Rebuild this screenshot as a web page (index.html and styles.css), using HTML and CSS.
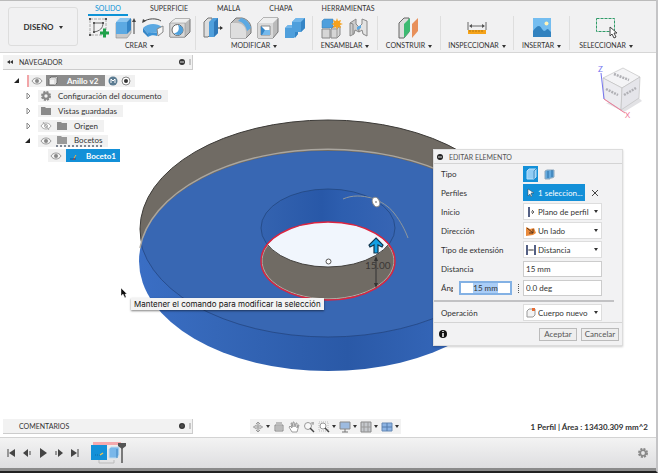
FILE: index.html
```html
<!DOCTYPE html>
<html lang="es">
<head>
    <meta charset="UTF-8">
    <meta name="viewport" content="width=device-width, initial-scale=1.0">
    <title>Anillo v2</title>
    <link rel="stylesheet" href="styles.css">
</head>
<body>
<div class="app">

    <header class="toolbar">
        <button class="workspace">DISEÑO <span class="caret"></span></button>

        <div class="ribbon">
            <nav class="tabs">
                <a href="#" class="tab active">SOLIDO</a>
                <a href="#" class="tab">SUPERFICIE</a>
                <a href="#" class="tab">MALLA</a>
                <a href="#" class="tab">CHAPA</a>
                <a href="#" class="tab">HERRAMIENTAS</a>
            </nav>

            <div class="groups">
                <div class="group crear">
                    <div class="icons">
                        <svg width="22" height="22" viewBox="0 0 22 22"><path d="M2 2h16v16H2z" fill="none" stroke="#aaa" stroke-dasharray="3 1"/><path d="M6 6h9c0 5-3 8-9 9z" fill="none" stroke="#666"/><path d="M1 1h2v2H1zM17 1h2v2h-2zM1 17h2v2H1zM5 5h2v2H5zM14 5h2v2h-2zM5 14h2v2H5z" fill="#555"/><path d="M12 16h9M16.500 11.500v9" stroke="#1fa14a" stroke-width="3"/></svg>
                        <svg width="22" height="22" viewBox="0 0 22 22"><path d="M1 6l4-4h11v14l-4 5H1z" fill="#c9c9c9" stroke="#888" stroke-width=".6"/><path d="M1 5l4-4h11l-4 4z" fill="#8cc6f0"/><path d="M1 5h11v12H1z" fill="#5ca9e2"/><path d="M12 5l4-4v12l-4 4z" fill="#3585c6"/><path d="M19 17V4" stroke="#444"/><path d="M17 5l2-4 2 4z" fill="#444"/></svg>
                        <svg width="22" height="22" viewBox="0 0 22 22"><path d="M1 5C6 1 15 1 19 4" fill="none" stroke="#444"/><path d="M0 6l1-4 3 2z" fill="#444"/><path d="M1 11c5-5 14-5 19-1l-5 6c-3-1-6-1-9 1z" fill="#5ca9e2"/><path d="M1 11v4l5 5v-3z" fill="#3585c6"/><path d="M6 16c3-1 6-1 9 0v3c-3-1-6-1-9 1z" fill="#3c93d6"/><path d="M15 12l6-3v6l-5 4z" fill="#f6f6f6" stroke="#888"/></svg>
                        <svg width="22" height="22" viewBox="0 0 22 22"><path d="M1 6l5-4h15v13l-5 5H1z" fill="#bbb" stroke="#777"/><path d="M1 6l5-4h15l-5 4z" fill="#eee"/><path d="M1 6h15v14H1z" fill="#d9d9d9" stroke="#888" stroke-width=".5"/><circle cx="8.500" cy="13" r="5.500" fill="#fff" stroke="#666"/><path d="M9 8a5 5 0 1 1-4 8c4 0 6-4 4-8z" fill="#4ea0dc"/></svg>
                    </div>
                    <button class="caption">CREAR<span class="caret"></span></button>
                </div>

                <div class="group modificar">
                    <div class="icons">
                        <svg width="22" height="22" viewBox="0 0 22 22"><path d="M1 5l4-4h4v15l-4 4H1z" fill="#ddd" stroke="#777"/><path d="M6 5l4-4h5v15l-4 4H6z" fill="#4f9fdc"/><path d="M11 5l4-4v15l-4 4z" fill="#3078b8"/><path d="M15 11h4" stroke="#333"/><path d="M17 9l3 2-3 2z" fill="#333"/></svg>
                        <svg width="22" height="22" viewBox="0 0 22 22"><path d="M1 6l5-5h6c5 1 9 5 9 10v5l-5 5H1z" fill="#bdbdbd" stroke="#777"/><path d="M1 6h6c5 0 9 4 9 9v6H1z" fill="#dedede"/><path d="M8 4l3-3c5 1 9 5 10 10l-4 3c-1-5-4-9-9-10z" fill="#5ca9e2"/></svg>
                        <svg width="22" height="22" viewBox="0 0 22 22"><path d="M1 6l5-5h15v14l-5 6H1z" fill="#bbb" stroke="#777"/><path d="M1 6l5-5h15l-5 5z" fill="#eee"/><path d="M1 6h15v15H1z" fill="#d9d9d9"/><path d="M4 9h9v9H4z" fill="#fff" stroke="#888"/><path d="M4 9l4 4v5H4z" fill="#3585c6"/><path d="M8 13h5v5H5z" fill="#75b9ec"/></svg>
                        <svg width="22" height="22" viewBox="0 0 22 22"><path d="M1 11l3-3h4V5l4-4h9v10l-4 4h-3v2l-4 4H1z" fill="#4f9fdc"/><path d="M8 5l4-4h9l-4 4zM1 11l3-3h4v3z" fill="#72b6ea"/><path d="M17 5l4-4v10l-4 4zM11 15h3v2l-3 4z" fill="#3585c6"/></svg>
                    </div>
                    <button class="caption">MODIFICAR<span class="caret"></span></button>
                </div>

                <div class="group ensamblar">
                    <div class="icons">
                        <svg width="22" height="22" viewBox="0 0 22 22"><path d="M1 4l2-2h9v9H1z" fill="#4f9fdc" stroke="#3a7cb0" stroke-width=".5"/><path d="M1 12h8v9H1zM10 12l3-3h6v9l-3 3h-6z" fill="#d6d6d6" stroke="#888"/><path d="M10 12h6v9M16 12l3-3" fill="none" stroke="#999"/><path d="M16 1l1 3 3-1-1 3 3 1-3 1 1 3-3-1-1 3-1-3-3 1 1-3-3-1 3-1-1-3 3 1z" fill="#f7a11b"/></svg>
                        <svg width="22" height="22" viewBox="0 0 22 22"><path d="M2 6l6-4v5l3 3v5l-4-2-1 4-4 2z" fill="#ccc" stroke="#888"/><path d="M19 4l-5-2v5l-3 3v5l3-2 1 4 4 2z" fill="#e3e3e3" stroke="#888"/><path d="M2 6l3 1v10" fill="none" stroke="#888"/><path d="M9 10l4-2v3l-4 2z" fill="#5ca9e2"/></svg>
                    </div>
                    <button class="caption">ENSAMBLAR<span class="caret"></span></button>
                </div>

                <div class="group construir">
                    <div class="icons">
                        <svg width="22" height="22" viewBox="0 0 22 22"><path d="M1 6l5-5h5v14l-5 6H1z" fill="#ddd" stroke="#666"/><path d="M6 7l6-6v13l-6 7z" fill="#3dba72"/><path d="M14 7l6-6v13l-6 7z" fill="#e8905a"/></svg>
                    </div>
                    <button class="caption">CONSTRUIR<span class="caret"></span></button>
                </div>

                <div class="group inspeccionar">
                    <div class="icons">
                        <svg width="22" height="22" viewBox="0 0 22 22"><path d="M2 5v8M20 5v8M4 9h14" stroke="#666"/><path d="M3 9l3-2v4zM19 9l-3-2v4z" fill="#555"/><path d="M2 13h18v4H2z" fill="#f5a31a"/><path d="M4 13v2M7 13v2M10 13v2M13 13v2M16 13v2" stroke="#8a5a00" stroke-width=".6"/></svg>
                    </div>
                    <button class="caption">INSPECCIONAR<span class="caret"></span></button>
                </div>

                <div class="group insertar">
                    <div class="icons">
                        <svg width="22" height="22" viewBox="0 0 22 22"><path d="M2 1h18v19H2z" fill="#74bdf0"/><path d="M2 14c2-3 4-5 6-5s3 4 5 5c2 0 2-2 4-2l3 3v5H2z" fill="#3282bf"/><circle cx="15.500" cy="6.500" r="2" fill="#fff3b8"/></svg>
                    </div>
                    <button class="caption">INSERTAR<span class="caret"></span></button>
                </div>

                <div class="group seleccionar">
                    <div class="icons">
                        <svg width="22" height="22" viewBox="0 0 22 22"><path d="M1.500 1.500h18v13h-18z" fill="none" stroke="#2f9b68" stroke-dasharray="3 1"/><path d="M15 10v9l2-2 2 4 2-1-2-4h3z" fill="#fff" stroke="#444"/></svg>
                    </div>
                    <button class="caption">SELECCIONAR<span class="caret"></span></button>
                </div>
            </div>
        </div>
    </header>

    <main class="canvas">
        <svg class="model" viewBox="0 53 656 384" preserveAspectRatio="xMidYMid meet">
            <defs>
                <linearGradient id="wall" x1="140" x2="517" y1="0" y2="0" gradientUnits="userSpaceOnUse">
                    <stop offset="0" stop-color="#3a6ec4"/>
                    <stop offset=".2" stop-color="#3567b8"/>
                    <stop offset=".55" stop-color="#2a59a7"/>
                    <stop offset=".75" stop-color="#3263b4"/>
                    <stop offset="1" stop-color="#3a6ec4"/>
                </linearGradient>
                <linearGradient id="bore" x1="261" x2="396" y1="0" y2="0" gradientUnits="userSpaceOnUse">
                    <stop offset="0" stop-color="#3463b0"/>
                    <stop offset=".45" stop-color="#2858a8"/>
                    <stop offset=".6" stop-color="#2d5eaf"/>
                    <stop offset="1" stop-color="#3765b4"/>
                </linearGradient>
                <clipPath id="lower"><ellipse cx="328" cy="261" rx="189" ry="110"/></clipPath>
                <clipPath id="hole"><ellipse cx="328" cy="261" rx="67" ry="39"/></clipPath>
            </defs>
            <ellipse cx="328" cy="229" rx="188" ry="109" fill="#706b64" stroke="#3d3b38"/>
            <ellipse cx="328" cy="261" rx="189" ry="110" fill="url(#wall)"/>
            <ellipse cx="328" cy="228" rx="189" ry="109" fill="#3867b3" stroke="#244681" stroke-width=".8" clip-path="url(#lower)"/>
            <path d="M140 248A189 110 0 0 1 516 248" fill="none" stroke="#aaa69f" stroke-width="1.500"/>
            <ellipse cx="328" cy="228" rx="67" ry="39" fill="url(#bore)" stroke="#22467f" stroke-width=".8"/>
            <ellipse cx="328" cy="261" rx="67" ry="39" fill="#706b64"/>
            <ellipse cx="328" cy="228" rx="67" ry="39" fill="#f1f6fd" stroke="#44423f" clip-path="url(#hole)"/>
            <path d="M268 245A66 38 0 1 0 388 245" fill="none" stroke="#b5aea6"/>
            <ellipse cx="328" cy="261" rx="67" ry="39" fill="none" stroke="#dc2440" stroke-width="1.400"/>
            <circle cx="328.500" cy="261.500" r="2.500" fill="#fff" stroke="#555"/>
            <path d="M343 199C361 191 384 200 394 213C401 222 405 230 408 238" fill="none" stroke="#8f989d"/>
            <ellipse cx="376" cy="202" rx="3.500" ry="5" transform="rotate(-25 376 202)" fill="#fff" stroke="#8a8a8a"/>
            <circle cx="376" cy="202" r="1" fill="#999"/>
            <path d="M376 258v28" stroke="#333"/>
            <path d="M374 261l2-5 2 5zM374 283l2 5 2-5z" fill="#333"/>
            <text class="dimension" x="365" y="269">15.00</text>
            <path d="M376 238l7 7-1 2-4-2v8h-4v-8l-4 2-1-2z" fill="#14a0e4" stroke="#12364e" stroke-width="1.200"/>
        </svg>

        <section class="browser">
            <h2 class="bar">
                <svg width="8" height="6" viewBox="0 0 8 6"><path d="M4 1v4L1 3zM7 1v4L4 3z" fill="#333"/></svg>
                <span>NAVEGADOR</span>
                <svg class="bar-end" width="12" height="8" viewBox="0 0 12 8"><circle cx="3" cy="4" r="3" fill="#333"/><path d="M1 4h4" stroke="#ddd"/><path d="M11 1v6" stroke="#999"/></svg>
            </h2>

            <ul class="tree">
                <li class="row root">
                    <svg class="twisty" width="8" height="8"><path d="M6 1v5H1z" fill="#222"/></svg>
                    <div class="node marked">
                        <svg width="12" height="8" viewBox="0 0 12 8"><path d="M1 4C3 0 9 0 11 4C9 8 3 8 1 4z" fill="#f4f4f4" stroke="#999"/><circle cx="6" cy="4" r="2" fill="#888"/></svg>
                        <span class="document">
                            <svg width="10" height="10"><path d="M1 3l2-2h6v6l-2 2H1z" fill="#f2f2f2" stroke="#666"/><path d="M1 3h6v6M7 3l2-2" fill="none" stroke="#ccc"/></svg>
                            Anillo v2
                        </span>
                        <svg width="10" height="10"><circle cx="5" cy="5" r="4.500" fill="#5b7b91"/><path d="M3 7V3l2 2 2-2v4" fill="none" stroke="#fff"/></svg>
                        <svg width="10" height="10"><circle cx="5" cy="5" r="4" fill="#fff" stroke="#888"/><circle cx="5" cy="5" r="2" fill="#333"/></svg>
                    </div>
                </li>
                <li class="row">
                    <svg class="twisty" width="8" height="8"><path d="M3 1l3 3-3 3z" fill="#fff" stroke="#888"/></svg>
                    <div class="node">
                        <svg width="12" height="12" viewBox="0 0 12 12"><circle cx="6" cy="6" r="4" fill="none" stroke="#888" stroke-width="2" stroke-dasharray="2 1.140"/><circle cx="6" cy="6" r="2.700" fill="none" stroke="#888" stroke-width="2"/></svg>
                        <span>Configuración del documento</span>
                    </div>
                </li>
                <li class="row">
                    <svg class="twisty" width="8" height="8"><path d="M3 1l3 3-3 3z" fill="#fff" stroke="#888"/></svg>
                    <div class="node">
                        <svg width="12" height="10"><path d="M1 1h4l1 1h5v7H1z" fill="#8b8b8b"/></svg>
                        <span>Vistas guardadas</span>
                    </div>
                </li>
                <li class="row">
                    <svg class="twisty" width="8" height="8"><path d="M3 1l3 3-3 3z" fill="#fff" stroke="#888"/></svg>
                    <div class="node">
                        <svg width="12" height="8" viewBox="0 0 12 8"><path d="M1 4C3 0 9 0 11 4C9 8 3 8 1 4z" fill="#fff" stroke="#aaa"/><circle cx="6" cy="4" r="1.500" fill="none" stroke="#aaa"/><path d="M3 0l6 8" stroke="#aaa"/></svg>
                        <svg width="12" height="10"><path d="M1 1h4l1 1h5v7H1z" fill="#8b8b8b"/></svg>
                        <span>Origen</span>
                    </div>
                </li>
                <li class="row">
                    <svg class="twisty" width="8" height="8"><path d="M6 1v5H1z" fill="#222"/></svg>
                    <div class="node">
                        <svg width="12" height="8" viewBox="0 0 12 8"><path d="M1 4C3 0 9 0 11 4C9 8 3 8 1 4z" fill="#f4f4f4" stroke="#999"/><circle cx="6" cy="4" r="2" fill="#888"/></svg>
                        <div class="pending">
                            <svg width="12" height="10"><path d="M1 1h4l1 1h5v7H1z" fill="#999"/></svg>
                            <span>Bocetos</span>
                        </div>
                    </div>
                </li>
                <li class="row child">
                    <div class="node">
                        <svg width="12" height="8" viewBox="0 0 12 8"><path d="M1 4C3 0 9 0 11 4C9 8 3 8 1 4z" fill="#f4f4f4" stroke="#999"/><circle cx="6" cy="4" r="2" fill="#888"/></svg>
                        <span class="selected">
                            <svg width="12" height="10"><path d="M2 8h6" stroke="#0b5f99"/><path d="M6 7l2-3" stroke="#f6b23c"/><path d="M5 9l2-2" stroke="#c33"/></svg>
                            Boceto1
                        </span>
                    </div>
                </li>
            </ul>
        </section>

        <svg class="viewcube" width="48" height="56" viewBox="0 0 48 56">
            <path d="M10 40l18 9 18-11-4-4z" fill="#e2e2e5"/>
            <path d="M7 15L27 5l17 9-18 11z" fill="#f4f4f6" stroke="#bbb" stroke-width=".6"/>
            <path d="M7 15l19 10-1 22L8 36z" fill="#ececf0" stroke="#bbb" stroke-width=".6"/>
            <path d="M26 25l18-11-1 21-18 12z" fill="#e5e5ea" stroke="#bbb" stroke-width=".6"/>
            <path d="M18 11l15 6M10 26l12 6M28 32l12-7" stroke="#b0b0b5" stroke-width="2.500" stroke-dasharray="2 1"/>
            <path d="M5 10l3 26" stroke="#7474f0"/>
            <path d="M8 36l21 14" stroke="#ef7897"/>
            <text class="axis-z" x="2" y="9">Z</text>
            <text class="axis-x" x="29" y="55">X</text>
        </svg>

        <form class="dialog">
            <h2 class="dialog-title">
                <svg width="6" height="6"><circle cx="3" cy="3" r="3" fill="#222"/><path d="M1 3h4" stroke="#ddd"/></svg>
                EDITAR ELEMENTO
            </h2>

            <div class="fields">
                <div class="field">
                    <span>Tipo</span>
                    <div class="control types">
                        <button type="button" class="type on" aria-label="Extrusión"><svg width="12" height="12"><path d="M2 3l2-2h7v8l-2 2H2z" fill="#91cdf5" stroke="#b9e0fa"/><path d="M9 3v8M9 3l2-2" fill="none" stroke="#4b8fc0"/></svg></button>
                        <button type="button" class="type" aria-label="Extrusión fina"><svg width="12" height="12"><path d="M2 3l2-1h7v7l-2 1H7v1H2z" fill="#62a9df" stroke="#8fa9bd"/><path d="M5 3v7M9 2v7" stroke="#2d6ea3"/></svg></button>
                    </div>
                </div>
                <div class="field">
                    <span>Perfiles</span>
                    <div class="control">
                        <button type="button" class="selection"><svg width="8" height="10"><path d="M1 1v7l2-2 1 3 1-1-1-3h3z" fill="#fff" stroke="#345" stroke-width=".5"/></svg>1 seleccion...</button>
                        <button type="button" class="clear" aria-label="Quitar"><svg width="6" height="6"><path d="M0 0l6 6M6 0L0 6" stroke="#444"/></svg></button>
                    </div>
                </div>
                <div class="field">
                    <label for="inicio">Inicio</label>
                    <div class="control drop">
                        <svg width="10" height="10"><path d="M3 0v10" stroke="#1d2d5c" stroke-width="1.500"/><path d="M5 5h3M6 3l2 2-2 2" fill="none" stroke="#666"/></svg>
                        <select id="inicio"><option>Plano de perfil</option></select><span class="caret"></span>
                    </div>
                </div>
                <div class="field">
                    <label for="direccion">Dirección</label>
                    <div class="control drop">
                        <svg width="10" height="10"><path d="M0 1l4 2 4-1 2 5-3 2-7 1z" fill="#e98a3c"/><path d="M1 2l6 5M7 3v4H3" fill="none" stroke="#5a3416"/></svg>
                        <select id="direccion"><option>Un lado</option></select><span class="caret"></span>
                    </div>
                </div>
                <div class="field">
                    <label for="extension">Tipo de extensión</label>
                    <div class="control drop">
                        <svg width="10" height="10"><path d="M1 0v10M9 0v10" stroke="#1d2d5c" stroke-width="1.500"/><path d="M2 5h6M4 4v2M6 4v2" stroke="#777"/></svg>
                        <select id="extension"><option>Distancia</option></select><span class="caret"></span>
                    </div>
                </div>
                <div class="field">
                    <label for="distancia">Distancia</label>
                    <div class="control"><input id="distancia" type="text" value="15 mm"></div>
                </div>
                <div class="field">
                    <label for="angulo" class="short">Ángulo</label>
                    <div class="control"><input id="angulo" type="text" value="0.0 deg"></div>
                    <div class="quick">
                        <div class="quick-box"><span class="quick-value" contenteditable="true">15 mm</span></div>
                        <span class="dots"></span>
                    </div>
                </div>
                <hr>
                <div class="field">
                    <label for="operacion">Operación</label>
                    <div class="control drop">
                        <svg width="10" height="10"><path d="M1 3l2-2h6v6l-2 2H1z" fill="#f3f3f3" stroke="#999"/><path d="M6 0h3v3H6z" fill="#e66c33"/></svg>
                        <select id="operacion"><option>Cuerpo nuevo</option></select><span class="caret"></span>
                    </div>
                </div>
            </div>

            <div class="actions">
                <svg class="info" width="8" height="8"><circle cx="4" cy="4" r="4" fill="#111"/><path d="M4 1v1M4 3v4" stroke="#fff" stroke-width="1.500"/></svg>
                <button type="button">Aceptar</button>
                <button type="button">Cancelar</button>
            </div>
        </form>

        <svg class="pointer" width="8" height="12"><path d="M1 1v8l2-2 2 4 1-1-1-3h2z" fill="#111" stroke="#fff" stroke-width=".4"/></svg>
        <div class="tooltip" role="tooltip">Mantener el comando para modificar la selección</div>

        <div class="status">
            <h2 class="bar comments">
                <span>COMENTARIOS</span>
                <svg class="bar-end" width="12" height="8" viewBox="0 0 12 8"><circle cx="3" cy="4" r="3" fill="#333"/><path d="M3 2v4M1 4h4" stroke="#555"/><path d="M11 1v6" stroke="#999"/></svg>
            </h2>
            <div class="view-tools">
                <button aria-label="Orbitar"><svg width="12" height="12"><path d="M6 1v10M1 6h10M4 3l2-2 2 2M4 9l2 2 2-2" fill="none" stroke="#999"/><ellipse cx="6" cy="6" rx="4" ry="2" fill="none" stroke="#aaa"/></svg><span class="caret"></span></button>
                <button aria-label="Mirar a"><svg width="12" height="12"><path d="M2 4h8v6H2zM3 2h6" fill="#ddd" stroke="#888"/><path d="M3 6h6M3 8h6" stroke="#999"/></svg></button>
                <button aria-label="Encuadre"><svg width="12" height="12"><path d="M4 11L1 6l1-1 2 2-1-5h1l1 4V1h1l1 5 1-4h1v5l1-3h1L9 11z" fill="#fff" stroke="#888" stroke-width=".8"/></svg></button>
                <button aria-label="Zoom"><svg width="12" height="12"><circle cx="5" cy="5" r="3.500" fill="#f8f8f8" stroke="#999"/><path d="M7 7l4 4" stroke="#444" stroke-width="1.500"/><path d="M10 1v3M8 2h3" stroke="#999"/></svg></button>
                <button aria-label="Ajustar"><svg width="12" height="12"><path d="M1 1h9v9H1z" fill="none" stroke="#bbb" stroke-dasharray="1 1"/><circle cx="5" cy="5" r="3" fill="#fff" stroke="#999"/><path d="M7 7l4 4" stroke="#444" stroke-width="1.500"/></svg><span class="caret"></span></button>
                <button aria-label="Visualización"><svg width="12" height="12"><path d="M1 1h10v7H1z" fill="#9dbbe0" stroke="#888"/><path d="M6 8v3M3 11h6" stroke="#777"/></svg><span class="caret"></span></button>
                <button aria-label="Rejilla"><svg width="12" height="12"><path d="M1 1h10v10H1z" fill="#c6c9cd" stroke="#888"/><path d="M4 1v10M8 1v10M1 6h10" stroke="#999"/></svg><span class="caret"></span></button>
                <button aria-label="Ventanas"><svg width="12" height="12"><path d="M1 2h10v8H1z" fill="#8cb3e3" stroke="#6689b5"/><path d="M6 2v8M1 6h10" stroke="#547cad"/></svg><span class="caret"></span></button>
            </div>
            <p class="measure">1 Perfil | Área : 13430.309 mm^2</p>
        </div>
    </main>

    <footer class="timeline">
        <div class="player">
            <button aria-label="Inicio"><svg width="10" height="10"><path d="M2 1v8" stroke="#444"/><path d="M9 1v8L3 5z" fill="#444"/></svg></button>
            <button aria-label="Anterior"><svg width="10" height="10"><path d="M6 1v8L1 5z" fill="#444"/><path d="M8 3v4" stroke="#444"/></svg></button>
            <button aria-label="Reproducir"><svg width="10" height="10"><path d="M2 0l7 5-7 5z" fill="#444"/></svg></button>
            <button aria-label="Siguiente"><svg width="10" height="10"><path d="M4 1v8l5-4z" fill="#444"/><path d="M2 3v4" stroke="#444"/></svg></button>
            <button aria-label="Final"><svg width="10" height="10"><path d="M8 1v8" stroke="#444"/><path d="M1 1v8l6-4z" fill="#444"/></svg></button>
        </div>
        <svg class="history" width="36" height="22" viewBox="0 0 36 22">
            <path d="M2 0h28v3H2z" fill="#f5a9ad"/>
            <path d="M8 18v3h15v-3" fill="none" stroke="#bbb"/>
            <path d="M0 3h16v15H0z" fill="#1390d8"/>
            <path d="M4 13h5" stroke="#0b6baa" stroke-dasharray="1 1"/>
            <path d="M9 13l3-2" stroke="#f3c24c" stroke-width="1.500"/>
            <path d="M18 7l2-2h8v8l-2 3h-8z" fill="#79b7ea" stroke="#c2dbee"/>
            <path d="M26 7v9" stroke="#4184bf"/>
            <path d="M27 1h8v3l-4 3-4-3z" fill="#555"/>
            <path d="M31 6v15" stroke="#555" stroke-width="1.500"/>
        </svg>
        <button class="settings" aria-label="Configuración"><svg width="12" height="12" viewBox="0 0 12 12"><circle cx="6" cy="6" r="4" fill="none" stroke="#888" stroke-width="2" stroke-dasharray="2 1.140"/><circle cx="6" cy="6" r="2.700" fill="none" stroke="#888" stroke-width="1.600"/></svg></button>
    </footer>
</div>
</body>
</html>
```
FILE: styles.css
```css
* {
    margin: 0;
    padding: 0;
    box-sizing: border-box;
}

body {
    font-family: Lato, "Liberation Sans", sans-serif;
    font-size: 8px;
    line-height: 12px;
    color: #333;
    background-color: #222;
}

button, input, select {
    font: inherit;
    color: inherit;
    border: 0;
    background: none;
}

svg {
    display: block;
    flex-shrink: 0;
}

.app {
    display: flex;
    flex-direction: column;
    height: 100vh;
    background-color: #fff;
    border-bottom: 2px solid #222;
    border-right: 2px solid #c4c4c6;
}

.caret {
    display: inline-block;
    border: 2px solid transparent;
    border-top: 3px solid #333;
    border-bottom: 0;
    margin-left: 3px;
    vertical-align: middle;
}

/* Barra de herramientas */
.toolbar {
    display: flex;
    height: 53px;
    flex-shrink: 0;
    padding-left: 8px;
    background-color: #f1f1f2;
    border-top: 1px solid #bbb;
    border-bottom: 1px solid #d6d6d6;
}

.workspace {
    width: 70px;
    height: 39px;
    margin-top: 6px;
    border: 1px solid #ddd;
    border-radius: 3px;
    font-weight: bold;
}

.ribbon {
    flex: 1;
    margin-left: 6px;
}

.tabs {
    display: flex;
    padding-left: 4px;
    height: 15px;
    font-size: 7px;
}

.tab {
    height: 15px;
    padding: 1px 7px;
    margin-right: 15px;
    color: #333;
    text-decoration: none;
}

.tab.active {
    color: #0e93d6;
    border-bottom: 2px solid #0e93d6;
}

.groups {
    display: flex;
}

.group {
    display: flex;
    flex-direction: column;
    align-items: center;
    height: 34px;
    border-right: 1px solid #dedede;
}

.group:last-child {
    border-right: 0;
}

.icons {
    display: flex;
    gap: 5px;
    margin-top: 1px;
}

.caption {
    white-space: nowrap;
    height: 14px;
    font-size: 7px;
}

.crear {
    width: 112px;
}

.modificar {
    width: 117px;
}

.ensamblar {
    width: 65px;
}

.construir {
    width: 63px;
}

.inspeccionar {
    width: 73px;
}

.insertar {
    width: 56px;
}

.seleccionar {
    width: 72px;
}

/* Zona de trabajo */
.canvas {
    position: relative;
    flex: 1;
    display: flex;
    flex-direction: column;
    justify-content: space-between;
    padding: 2px 8px 3px 3px;
}

.model {
    position: absolute;
    top: 0;
    left: 0;
    width: 100%;
    height: 100%;
}

.dimension {
    font-size: 10px;
    fill: #3a3836;
}

.browser,
.status {
    position: relative;
}

.bar {
    display: flex;
    align-items: center;
    gap: 5px;
    width: 190px;
    height: 15px;
    padding: 0 1px 0 3px;
    font-size: 7px;
    font-weight: normal;
    background-color: #f2f2f2;
    border-right: 1px solid #ccc;
    border-bottom: 1px solid #ccc;
}

.bar-end {
    margin-left: auto;
}

.comments {
    padding-left: 16px;
}

.tree {
    list-style: none;
    margin-top: 4px;
}

.row {
    display: flex;
    align-items: center;
    gap: 4px;
    height: 13px;
    margin-bottom: 2px;
    padding-left: 21px;
}

.row.root {
    padding-left: 10px;
}

.row.child {
    padding-left: 45px;
}

.twisty {
    margin-right: 2px;
}

.node {
    display: flex;
    align-items: center;
    gap: 4px;
    height: 12px;
    padding: 0 6px 0 2px;
    background-color: #f1f1f1;
}

.node span {
    padding-left: 2px;
}

.marked {
    gap: 3px;
    padding: 0 4px 0 2px;
    border-left: 2px solid #f2a5a8;
}

.document,
.selected {
    display: flex;
    align-items: center;
    height: 11px;
    color: #fff;
    font-weight: bold;
}

.document {
    gap: 9px;
    width: 59px;
    background-color: #8c8c8c;
}

.child .node {
    padding-right: 0;
    height: 13px;
}

.selected {
    gap: 6px;
    width: 54px;
    height: 13px;
    background-color: #1390d8;
}

.pending {
    display: flex;
    align-items: center;
    gap: 4px;
    height: 12px;
    border-bottom: 2px dotted #7f8794;
}

.viewcube {
    position: absolute;
    top: 10px;
    right: 12px;
}

.axis-z,
.axis-x {
    font-size: 8px;
    fill: #7474f0;
}

.axis-x {
    fill: #ef7897;
}

/* Cuadro de edicion */
.dialog {
    position: absolute;
    top: 96px;
    right: 33px;
    width: 190px;
    background-color: #f2f2f3;
    border: 1px solid #dcdcdc;
    box-shadow: 0 1px 2px rgba(0, 0, 0, 0.2);
}

.dialog-title {
    display: flex;
    align-items: center;
    gap: 6px;
    height: 14px;
    padding-left: 3px;
    font-size: 7px;
    font-weight: normal;
    color: #555;
    border-bottom: 1px solid #d4d4d4;
}

.fields {
    padding: 0 20px 0 7px;
}

.field {
    position: relative;
    display: flex;
    align-items: center;
    justify-content: space-between;
    height: 19px;
}

.control {
    position: relative;
    display: flex;
    align-items: center;
    width: 79px;
    height: 17px;
}

.type {
    width: 15px;
    height: 16px;
    padding: 2px;
    margin-right: 3px;
}

.type.on,
.selection {
    background-color: #1390d8;
}

.selection {
    display: flex;
    align-items: center;
    gap: 3px;
    width: 62px;
    height: 17px;
    padding-left: 4px;
    color: #fff;
    white-space: nowrap;
}

.clear {
    padding: 2px;
    margin-left: 5px;
}

.control input {
    width: 100%;
    height: 16px;
    padding: 0 2px;
    background-color: #fff;
    border: 1px solid #ccc;
}

.drop {
    padding-left: 2px;
    background-color: #fff;
    border: 1px solid #ddd;
}

.drop select {
    flex: 1;
    min-width: 0;
    appearance: none;
    padding-left: 2px;
}

.drop .caret {
    margin-left: 0;
    margin-right: 3px;
}

/* Entrada rapida sobre la vista */
.quick {
    position: absolute;
    top: 3px;
    left: 12px;
    display: flex;
    align-items: center;
    gap: 6px;
    padding-left: 6px;
    background-color: #f2f2f3;
}

.quick-box {
    width: 53px;
    height: 14px;
    text-align: center;
    background-color: #fff;
    border: 2px solid #83b1e4;
    line-height: 10px;
}

.quick-value {
    background-color: #a9cdf7;
}

.dots {
    height: 9px;
    border-left: 1px dotted #555;
}

hr {
    height: 2px;
    margin: 3px -12px 1px -7px;
    border: 0;
    background-color: #c2c2c4;
}

.actions {
    display: flex;
    align-items: center;
    gap: 4px;
    height: 23px;
    padding: 0 3px 0 5px;
    border-top: 1px solid #d4d4d4;
}

.actions button {
    width: 38px;
    height: 13px;
    color: #555;
    line-height: 11px;
    background-color: #eee;
    border: 1px solid #bbb;
}

.info {
    margin-right: auto;
}

.tooltip {
    position: absolute;
    top: 245px;
    left: 131px;
    padding: 0 3px;
    font-family: Inter, "Liberation Sans", sans-serif;
    font-size: 8px;
    color: #111;
    white-space: nowrap;
    background-color: #f3f3f3;
    box-shadow: 0 1px 2px rgba(0, 0, 0, 0.5);
}

.pointer {
    position: absolute;
    top: 234px;
    left: 120px;
}

.status {
    display: grid;
    grid-template-columns: 1fr auto 1fr;
    align-items: center;
}

.view-tools {
    display: flex;
    gap: 3px;
    height: 15px;
    padding: 0 2px;
    background-color: #f2f2f2;
}

.view-tools button {
    display: flex;
    align-items: center;
}

.view-tools .caret {
    margin-left: 2px;
}

.measure {
    text-align: right;
    font-weight: bold;
}

/* Linea de tiempo */
.timeline {
    display: flex;
    align-items: center;
    height: 34px;
    flex-shrink: 0;
    padding: 0 7px 0 6px;
    background: linear-gradient(#f3f3f3, #dedee0);
    border-top: 1px solid #d3d3d3;
    border-bottom: 3px solid #8b8b8b;
}

.player {
    display: flex;
    gap: 6px;
}

.history {
    margin-left: 11px;
}

.settings {
    margin-left: auto;
}
```
